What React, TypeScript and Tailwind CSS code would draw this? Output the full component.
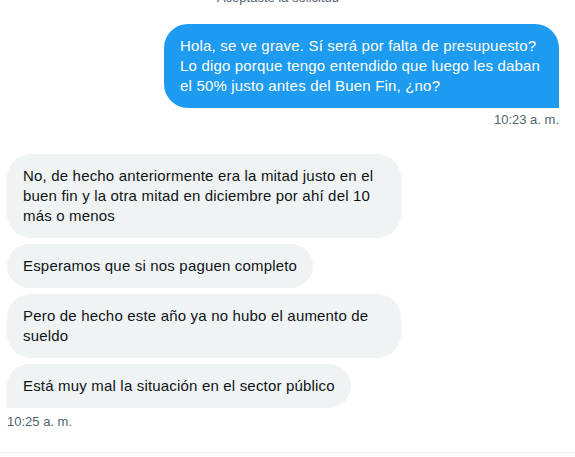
const incoming = [
  "No, de hecho anteriormente era la mitad justo en el buen fin y la otra mitad en diciembre por ahí del 10 más o menos",
  "Esperamos que si nos paguen completo",
  "Pero de hecho este año ya no hubo el aumento de sueldo",
  "Está muy mal la situación en el sector público",
];

const App = () => {
  return (
    <div
      className="h-[457px] w-[575px] overflow-hidden bg-white"
      style={{ fontFamily: "'Liberation Sans', Arial, sans-serif" }}
    >
      <div className="flex h-[453px] flex-col border-b border-[#eff3f4] pl-[7px] pr-4">
        {/* cut-off system notice */}
        <div className="-mt-[10px] flex justify-center pr-[10px] text-[13px] leading-4 text-[#536471]">
          Aceptaste la solicitud
        </div>

        {/* outgoing */}
        <div className="mt-[18px] flex flex-col items-end">
          <div className="max-w-[395px] rounded-3xl rounded-br-none bg-[#1d9bf0] px-4 py-3 text-[15px] leading-5 tracking-[0.18px] text-white">
            Hola, se ve grave. Sí será por falta de presupuesto? Lo digo porque tengo entendido que luego les daban el 50% justo antes del Buen Fin, ¿no?
          </div>
          <div className="mt-1 text-[13px] leading-4 text-[#536471]">10:23 a. m.</div>
        </div>

        {/* incoming */}
        <div className="mt-[26px] flex flex-col items-start gap-[6px]">
          {incoming.map((msg, i) => (
            <div
              key={i}
              className={
                i === incoming.length - 1
                  ? "max-w-[394px] rounded-3xl rounded-bl-none bg-[#eff3f4] px-4 py-3 text-[15px] leading-5 tracking-[0.18px] text-[#0f1419]"
                  : "max-w-[394px] rounded-3xl bg-[#eff3f4] px-4 py-3 text-[15px] leading-5 tracking-[0.18px] text-[#0f1419]"
              }
            >
              {msg}
            </div>
          ))}
        </div>
        <div className="mt-[6px] text-[13px] leading-4 text-[#536471]">10:25 a. m.</div>
      </div>
    </div>
  );
};

export default App;
